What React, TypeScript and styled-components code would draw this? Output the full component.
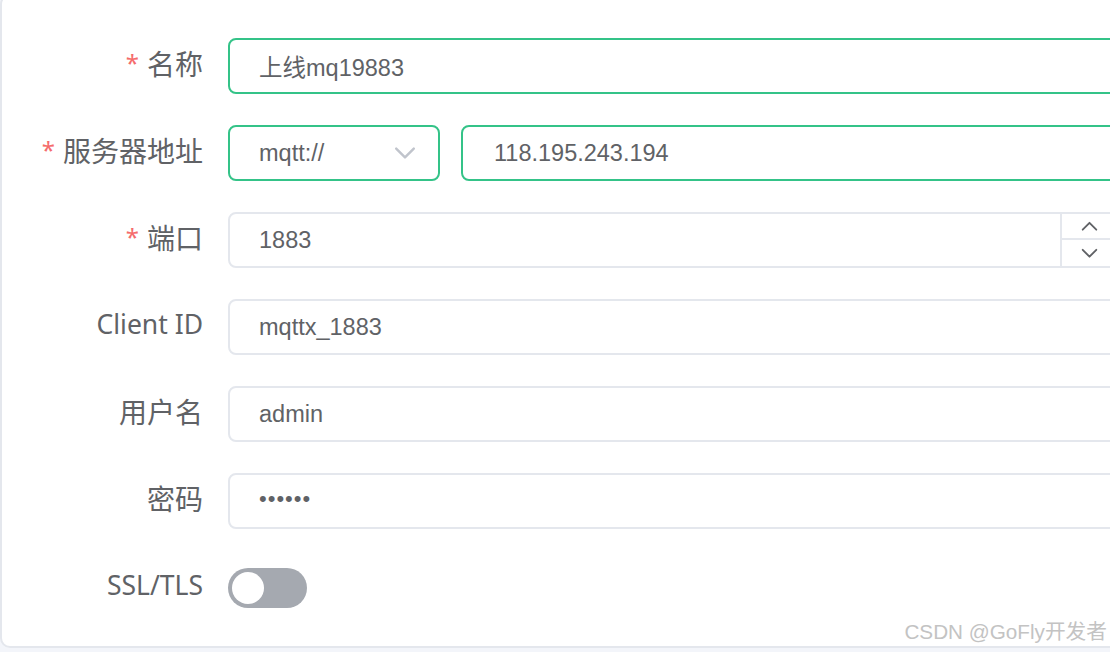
import React from "react";
import styled, { createGlobalStyle } from "styled-components";

const GlobalStyle = createGlobalStyle`
  html, body {
    margin: 0;
    padding: 0;
    background: #f3f5fa;
    overflow: hidden;
  }
  #root {
    width: 1110px;
    height: 652px;
    position: relative;
    overflow: hidden;
  }
`;

const Card = styled.div`
  box-sizing: border-box;
  width: 1300px;
  height: 654px;
  margin-top: -6px;
  background: #fff;
  border: 2px solid #e4e7ed;
  border-radius: 10px;
  padding-top: 42px;
`;

const Form = styled.div`
  display: flex;
  flex-direction: column;
  gap: 31px;
`;

const Row = styled.div`
  display: flex;
  align-items: center;
  height: 56px;
`;

const Label = styled.label<{ $latin?: boolean }>`
  width: 201px;
  flex: none;
  text-align: right;
  padding-right: 25px;
  box-sizing: content-box;
  font-family: "Noto Sans", "Noto Sans CJK SC", sans-serif;
  font-size: ${(p) => (p.$latin ? 26.5 : 28)}px;
  color: #606266;
  white-space: nowrap;
  margin-top: -6px;
`;

const Star = styled.span`
  color: #f56c6c;
  font-size: 24px;
  margin-right: 8px;
  position: relative;
  top: -3px;
`;

const Field = styled.div<{ $focus?: boolean; $width?: number }>`
  box-sizing: border-box;
  position: relative;
  display: flex;
  align-items: center;
  height: 56px;
  width: ${(p) => (p.$width ? `${p.$width}px` : "1000px")};
  flex: none;
  border: 2px solid ${(p) => (p.$focus ? "#34c388" : "#e4e7ed")};
  border-radius: 8px;
  padding-left: 29px;
  font-family: "Liberation Sans", "Noto Sans CJK SC", sans-serif;
  font-size: 23.5px;
  color: #606266;
`;

const Group = styled.div`
  display: flex;
  gap: 21px;
`;

const Arrow = styled.svg`
  position: absolute;
  right: 22px;
  top: 50%;
  transform: translateY(-50%);
`;

const Spinner = styled.div`
  position: absolute;
  left: 830px;
  top: 0;
  bottom: 0;
  width: 60px;
  border-left: 2px solid #e4e7ed;
  display: grid;
  grid-template-rows: 1fr 1fr;
`;

const SpinBtn = styled.div<{ $top?: boolean }>`
  display: flex;
  align-items: center;
  padding-left: 19px;
  ${(p) => (p.$top ? "border-bottom: 2px solid #e4e7ed;" : "")}
`;

const Dots = styled.span`
  font-size: 22px;
  letter-spacing: 1px;
  position: relative;
  top: -2px;
`;

const Switch = styled.div`
  box-sizing: border-box;
  width: 79px;
  height: 40px;
  border-radius: 20px;
  background: #a5a9b0;
  padding: 4px;
  display: flex;
`;

const Knob = styled.div`
  width: 32px;
  height: 32px;
  border-radius: 50%;
  background: #fff;
`;

const Watermark = styled.div`
  position: absolute;
  right: 3px;
  bottom: 7px;
  font-family: "Liberation Sans", "Noto Sans CJK SC", sans-serif;
  font-size: 20.7px;
  color: #c3c3c3;
`;

const Chevron = ({ dir, color, w }: { dir: "up" | "down"; color: string; w: number }) => (
  <svg width={w} height={w / 2 + 2} viewBox="0 0 20 12" fill="none">
    <path
      d={dir === "down" ? "M2 2 L10 10 L18 2" : "M2 10 L10 2 L18 10"}
      stroke={color}
      strokeWidth="2.2"
      strokeLinecap="round"
      strokeLinejoin="round"
    />
  </svg>
);

export default function App() {
  return (
    <>
      <GlobalStyle />
      <Card>
        <Form>
          <Row>
            <Label>
              <Star>*</Star>名称
            </Label>
            <Field $focus>上线mq19883</Field>
          </Row>
          <Row>
            <Label>
              <Star>*</Star>服务器地址
            </Label>
            <Group>
              <Field $focus $width={212}>
                mqtt://
                <Arrow width="22" height="14" viewBox="0 0 20 12" fill="none">
                  <path
                    d="M2 2 L10 10 L18 2"
                    stroke="#c0c4cc"
                    strokeWidth="2.2"
                    strokeLinecap="round"
                    strokeLinejoin="round"
                  />
                </Arrow>
              </Field>
              <Field $focus style={{ paddingLeft: 31 }}>
                118.195.243.194
              </Field>
            </Group>
          </Row>
          <Row>
            <Label>
              <Star>*</Star>端口
            </Label>
            <Field>
              1883
              <Spinner>
                <SpinBtn $top>
                  <Chevron dir="up" color="#606266" w={17} />
                </SpinBtn>
                <SpinBtn>
                  <Chevron dir="down" color="#606266" w={17} />
                </SpinBtn>
              </Spinner>
            </Field>
          </Row>
          <Row>
            <Label $latin>Client ID</Label>
            <Field>mqttx_1883</Field>
          </Row>
          <Row>
            <Label>用户名</Label>
            <Field>admin</Field>
          </Row>
          <Row>
            <Label>密码</Label>
            <Field>
              <Dots>••••••</Dots>
            </Field>
          </Row>
          <Row>
            <Label $latin>SSL/TLS</Label>
            <Switch>
              <Knob />
            </Switch>
          </Row>
        </Form>
      </Card>
      <Watermark>CSDN @GoFly开发者</Watermark>
    </>
  );
}
